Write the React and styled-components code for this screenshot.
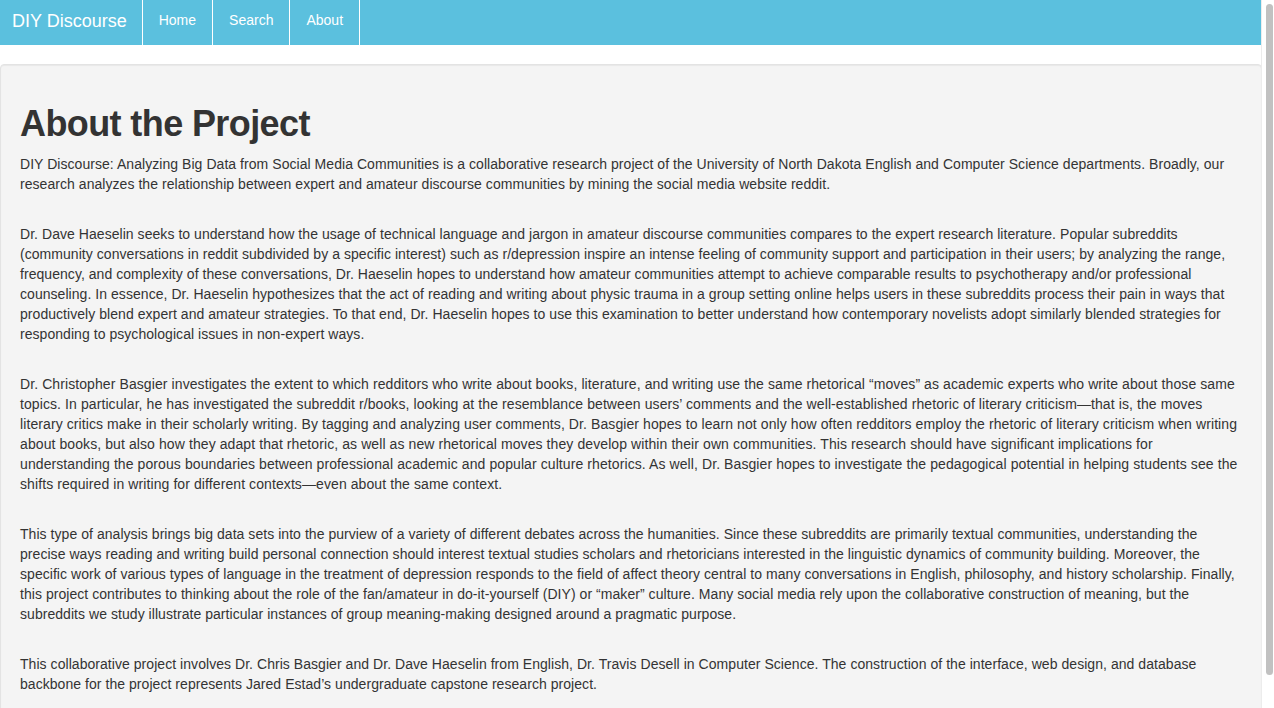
import React from "react";
import styled, { createGlobalStyle } from "styled-components";

const GlobalStyle = createGlobalStyle`
  html {
    background: #fff;
  }
  body {
    margin: 0;
    font-family: "Liberation Sans", Arial, Helvetica, sans-serif;
    font-size: 14px;
    line-height: 20px;
    color: #333;
    background: #fff;
  }
`;

const Page = styled.div`
  margin-right: 12px;
`;

const ScrollTrack = styled.div`
  position: fixed;
  top: 0;
  right: 0;
  bottom: 0;
  width: 12px;
  background: #fff;
  border-left: 1px solid #ececec;
`;

const ScrollThumb = styled.div`
  position: absolute;
  top: 4px;
  right: 1px;
  width: 7px;
  height: 671px;
  border-radius: 4px;
  background: #c1c1c1;
`;

const Navbar = styled.nav`
  display: flex;
  align-items: stretch;
  height: 45px;
  background-color: #5bc0de;
  margin-bottom: 19px;
`;

const Brand = styled.a`
  display: flex;
  align-items: center;
  padding: 0 15px 3px 12px;
  font-size: 18px;
  color: #fff;
  text-decoration: none;
  border-right: 1px solid #fff;
`;

const NavList = styled.ul`
  display: flex;
  margin: 0;
  padding: 0;
  list-style: none;
`;

const NavItem = styled.li`
  display: flex;
  border-right: 1px solid #fff;
`;

const NavLink = styled.a`
  display: flex;
  align-items: center;
  padding: 0 16px 5px;
  color: #fff;
  font-size: 14px;
  text-decoration: none;
`;

const Well = styled.section`
  padding: 19px;
  border: 1px solid #e3e3e3;
  border-radius: 4px;
  background-color: #f4f4f4;
  box-shadow: inset 0 1px 1px rgba(0, 0, 0, 0.05);
`;

const Heading = styled.h1`
  margin: 20px 0 10px;
  font-size: 36px;
  line-height: 1.1;
  font-weight: 700;
  letter-spacing: -0.6px;
  color: #333;
`;

const Paragraph = styled.p`
  margin: 0 0 30px;
  letter-spacing: ${(p) => p.$spacing || 0.05}px;
`;

const paragraphs = [
  {
    text: "DIY Discourse: Analyzing Big Data from Social Media Communities is a collaborative research project of the University of North Dakota English and Computer Science departments. Broadly, our research analyzes the relationship between expert and amateur discourse communities by mining the social media website reddit.",
  },
  {
    text: "Dr. Dave Haeselin seeks to understand how the usage of technical language and jargon in amateur discourse communities compares to the expert research literature. Popular subreddits (community conversations in reddit subdivided by a specific interest) such as r/depression inspire an intense feeling of community support and participation in their users; by analyzing the range, frequency, and complexity of these conversations, Dr. Haeselin hopes to understand how amateur communities attempt to achieve comparable results to psychotherapy and/or professional counseling. In essence, Dr. Haeselin hypothesizes that the act of reading and writing about physic trauma in a group setting online helps users in these subreddits process their pain in ways that productively blend expert and amateur strategies. To that end, Dr. Haeselin hopes to use this examination to better understand how contemporary novelists adopt similarly blended strategies for responding to psychological issues in non-expert ways.",
  },
  {
    text: "Dr. Christopher Basgier investigates the extent to which redditors who write about books, literature, and writing use the same rhetorical \u201cmoves\u201d as academic experts who write about those same topics. In particular, he has investigated the subreddit r/books, looking at the resemblance between users\u2019 comments and the well-established rhetoric of literary criticism\u2014that is, the moves literary critics make in their scholarly writing. By tagging and analyzing user comments, Dr. Basgier hopes to learn not only how often redditors employ the rhetoric of literary criticism when writing about books, but also how they adapt that rhetoric, as well as new rhetorical moves they develop within their own communities. This research should have significant implications for understanding the porous boundaries between professional academic and popular culture rhetorics. As well, Dr. Basgier hopes to investigate the pedagogical potential in helping students see the shifts required in writing for different contexts\u2014even about the same context.",
    spacing: 0.09,
  },
  {
    text: "This type of analysis brings big data sets into the purview of a variety of different debates across the humanities. Since these subreddits are primarily textual communities, understanding the precise ways reading and writing build personal connection should interest textual studies scholars and rhetoricians interested in the linguistic dynamics of community building. Moreover, the specific work of various types of language in the treatment of depression responds to the field of affect theory central to many conversations in English, philosophy, and history scholarship. Finally, this project contributes to thinking about the role of the fan/amateur in do-it-yourself (DIY) or \u201cmaker\u201d culture. Many social media rely upon the collaborative construction of meaning, but the subreddits we study illustrate particular instances of group meaning-making designed around a pragmatic purpose.",
  },
  {
    text: "This collaborative project involves Dr. Chris Basgier and Dr. Dave Haeselin from English, Dr. Travis Desell in Computer Science. The construction of the interface, web design, and database backbone for the project represents Jared Estad\u2019s undergraduate capstone research project.",
  },
];

const links = ["Home", "Search", "About"];

export default function App() {
  return (
    <Page>
      <GlobalStyle />
      <Navbar>
        <Brand href="#">DIY Discourse</Brand>
        <NavList>
          {links.map((link) => (
            <NavItem key={link}>
              <NavLink href="#">{link}</NavLink>
            </NavItem>
          ))}
        </NavList>
      </Navbar>
      <Well>
        <Heading>About the Project</Heading>
        {paragraphs.map((p, i) => (
          <Paragraph key={i} $spacing={p.spacing}>
            {p.text}
          </Paragraph>
        ))}
      </Well>
      <ScrollTrack>
        <ScrollThumb />
      </ScrollTrack>
    </Page>
  );
}
